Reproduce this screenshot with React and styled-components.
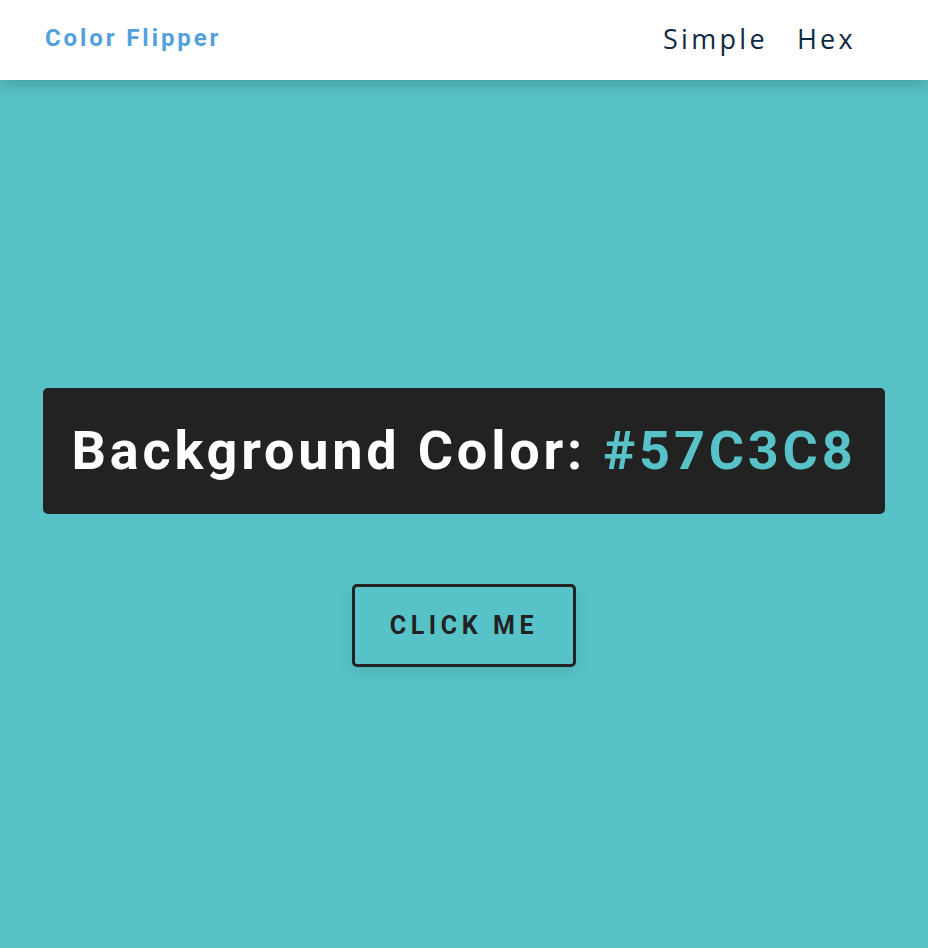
import React from "react";
import styled, { createGlobalStyle } from "styled-components";

const Global = createGlobalStyle`
  * { box-sizing: border-box; margin: 0; padding: 0; }
  html, body { margin: 0; padding: 0; }
  body {
    background: #57c3c8;
    font-family: "Open Sans", sans-serif;
    min-height: 948px;
  }
`;

const Nav = styled.nav`
  height: 80px;
  background: #fff;
  box-shadow: 0 5px 15px rgba(0, 0, 0, 0.2);
  position: relative;
  z-index: 1;
`;

const NavCenter = styled.div`
  height: 100%;
  display: flex;
  align-items: center;
  justify-content: space-between;
  padding: 0 72px 0 45px;
`;

const Brand = styled.h4`
  font-family: Roboto, sans-serif;
  font-weight: 700;
  font-size: 24px;
  letter-spacing: 2.9px;
  color: #52a1dd;
  margin-top: -4px;
`;

const Links = styled.ul`
  list-style: none;
  display: flex;
  gap: 29px;
  margin-top: -3px;
`;

const LinkItem = styled.li`
  font-family: "Open Sans", sans-serif;
  font-size: 27px;
  letter-spacing: 3.3px;
  color: #102a42;
`;

const Main = styled.main`
  min-height: calc(948px - 80px);
  display: flex;
  flex-direction: column;
  align-items: center;
  justify-content: center;
`;

const Container = styled.div`
  display: flex;
  flex-direction: column;
  align-items: center;
  margin-top: 26px;
`;

const Heading = styled.h2`
  background: #222;
  color: #fff;
  font-family: Roboto, sans-serif;
  font-weight: 700;
  font-size: 54px;
  letter-spacing: 3.8px;
  line-height: 62px;
  padding: 32px 20px;
  border-radius: 5px;
  margin-bottom: 70px;
  width: 842px;
  text-align: center;
  white-space: nowrap;
`;

const ColorText = styled.span`
  color: ${(p) => p.$color};
`;

const Button = styled.button`
  font-family: Roboto, sans-serif;
  font-weight: 700;
  font-size: 25px;
  letter-spacing: 4.6px;
  text-transform: uppercase;
  background: transparent;
  color: #222;
  border: 3px solid #222;
  border-radius: 5px;
  width: 224px;
  height: 83px;
  box-shadow: 0 5px 15px rgba(0, 0, 0, 0.1);
  cursor: pointer;
`;

export default function App() {
  const color = "#57C3C8";
  return (
    <>
      <Global />
      <Nav>
        <NavCenter>
          <Brand>Color Flipper</Brand>
          <Links>
            <LinkItem>Simple</LinkItem>
            <LinkItem>Hex</LinkItem>
          </Links>
        </NavCenter>
      </Nav>
      <Main>
        <Container>
          <Heading>
            Background Color: <ColorText $color={color}>{color}</ColorText>
          </Heading>
          <Button>Click me</Button>
        </Container>
      </Main>
    </>
  );
}
